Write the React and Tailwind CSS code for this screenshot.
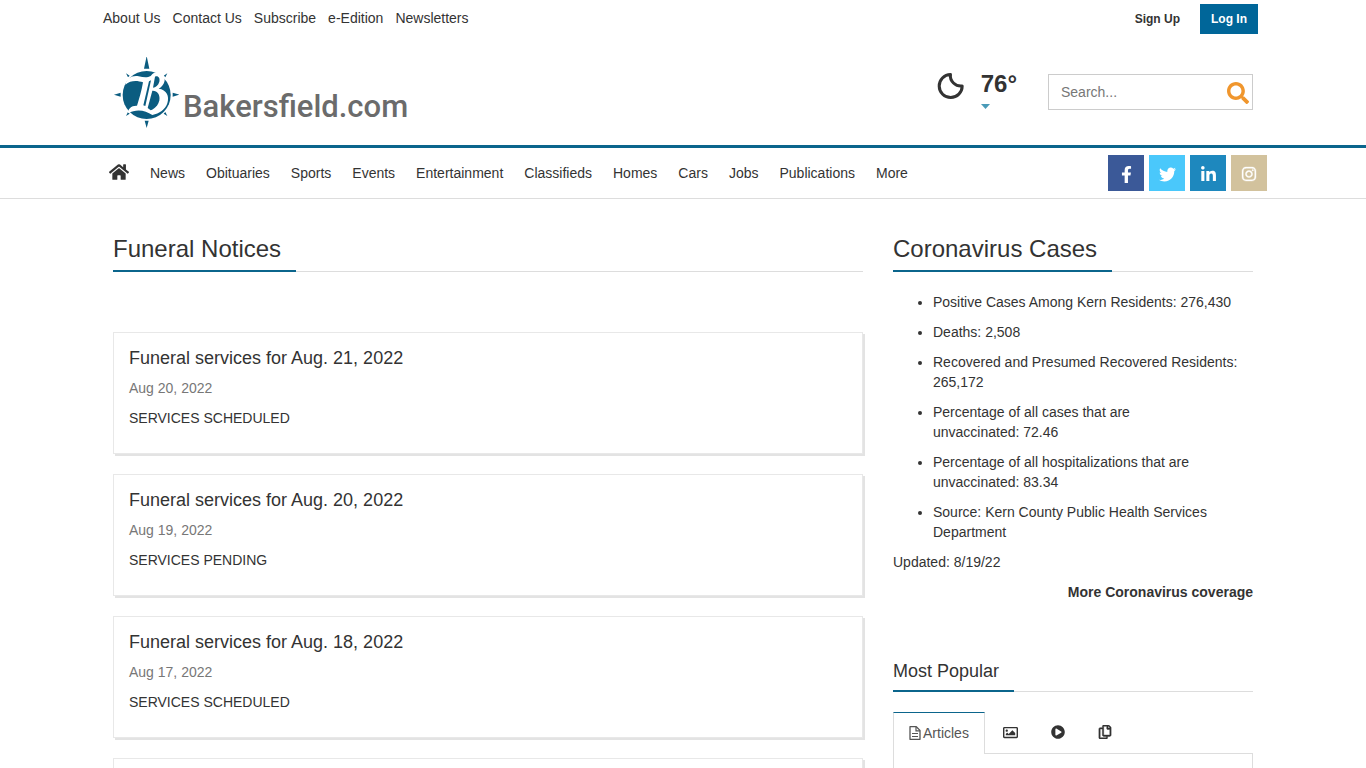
import React from "react";
import {
  FaHome,
  FaFacebookF,
  FaTwitter,
  FaLinkedinIn,
  FaInstagram,
  FaSearch,
  FaRegImage,
  FaPlayCircle,
  FaRegCopy,
} from "react-icons/fa";

const topLinks = ["About Us", "Contact Us", "Subscribe", "e-Edition", "Newsletters"];

const navLinks = [
  "News", "Obituaries", "Sports", "Events", "Entertainment", "Classifieds",
  "Homes", "Cars", "Jobs", "Publications", "More",
];

const social = [
  { label: "Facebook", Icon: FaFacebookF, bg: "bg-[#3b5998]", size: "size-[17px]" },
  { label: "Twitter", Icon: FaTwitter, bg: "bg-[#4ac8fb]", size: "size-[17px]" },
  { label: "LinkedIn", Icon: FaLinkedinIn, bg: "bg-[#1e88be]", size: "size-[17px]" },
  { label: "Instagram", Icon: FaInstagram, bg: "bg-[#d2c29d]", size: "size-[16px] stroke-current stroke-[12]" },
];

const notices = [
  { title: "Funeral services for Aug. 21, 2022", date: "Aug 20, 2022", text: "SERVICES SCHEDULED" },
  { title: "Funeral services for Aug. 20, 2022", date: "Aug 19, 2022", text: "SERVICES PENDING" },
  { title: "Funeral services for Aug. 18, 2022", date: "Aug 17, 2022", text: "SERVICES SCHEDULED" },
];

const cases = [
  "Positive Cases Among Kern Residents: 276,430",
  "Deaths: 2,508",
  "Recovered and Presumed Recovered Residents: 265,172",
  "Percentage of all cases that are unvaccinated:\u00a072.46",
  "Percentage of all hospitalizations that are unvaccinated:\u00a083.34",
  "Source: Kern County Public Health Services Department",
];

const card = "min-h-[122px] border border-[#e8e8e8] p-[15px] shadow-[2px_2px_0_#e3e3e3]";

function Emblem() {
  return (
    <svg viewBox="-1 0 66 72" className="h-[72px] w-[66px] shrink-0" aria-hidden="true">
      <g transform="translate(-14 -7) scale(0.33333)">
        <g fill="#0b5c80">
          <circle cx="140" cy="135" r="72" />
          <path d="M140 18l8 38h-16zM140 234l6-22h-12zM42 134l20-6v12zM238 134l-20-6v12z" />
          <path d="M78 70l11 7-5 5zM202 70l-11 7 5 5zM78 198l11-7-5-5zM202 198l-11-7 5-5z" />
        </g>
        <path
          fill="#fff"
          d="M76 104C80 86 96 75 116 79C130 82 142 84 152 78C162 66 176 62 186 69C200 80 196 106 176 116C200 119 209 138 202 160C196 179 178 191 157 195C136 180 110 176 84 189C84 176 94 166 111 167C117 148 125 122 129 97C112 91 92 90 76 104Z"
        />
        <g fill="#0b5c80">
          <path d="M165 80C174 76 181 84 178 95C175 106 167 112 159 113Z" />
          <path d="M157 122C171 121 181 133 178 151C175 166 164 177 152 181L143 174Z" />
          <path d="M147 94L153 91L136 168L130 166Z" />
        </g>
      </g>
    </svg>
  );
}

function Moon() {
  return (
    <svg viewBox="0 0 28 28" className="size-7" aria-label="Clear night">
      <path
        d="M13.500 2.500A11.500 11.500 0 1 0 25.200 14C18.500 14.800 12.500 9 13.500 2.500Z"
        fill="none"
        stroke="#333"
        strokeWidth="3"
        strokeLinejoin="round"
      />
    </svg>
  );
}

function FileIcon() {
  return (
    <svg viewBox="0 0 12 14" className="h-[14px] w-3" fill="none" stroke="currentColor" aria-hidden="true">
      <path d="M1 .7h6.300L11 4.400v8.900H1z" strokeWidth="1.300" strokeLinejoin="round" />
      <path d="M7 .9v3.900h4" strokeWidth="1.200" />
      <path d="M3 7.500h6M3 10.500h6" />
    </svg>
  );
}

function Heading({ children, size }) {
  return (
    <div className="border-b border-[#ddd]">
      <h2 className={`-mb-px inline-block border-b-2 border-[#0b658c] pr-[15px] align-top ${size}`}>{children}</h2>
    </div>
  );
}

export default function App() {
  return (
    <div className="bg-white font-['Liberation_Sans',Arial,sans-serif] text-sm leading-5 text-[#333]">
      <header>
        <div className="mx-auto flex h-[38px] max-w-[1170px] items-start justify-between pr-[10px] pl-[5px]">
          <nav aria-label="Utility" className="flex gap-3 pt-2">
            {topLinks.map((t) => (
              <a key={t} href="#">{t}</a>
            ))}
          </nav>
          <div className="flex items-center gap-5 pt-1 text-xs leading-5 font-bold">
            <a href="#">Sign Up</a>
            <a href="#" className="bg-[#006699] px-[11px] py-[5px] text-white">Log In</a>
          </div>
        </div>
        <div className="mx-auto flex h-[107px] max-w-[1170px] items-start justify-between px-[15px]">
          <a href="#" aria-label="Bakersfield.com" className="mt-[19px] flex">
            <Emblem />
            <span className="mt-[30px] ml-1 font-['Roboto',sans-serif] text-[31px] leading-10 font-medium text-[#6b6b6b]">
              Bakersfield.com
            </span>
          </a>
          <div className="mt-[34px] flex">
            <Moon />
            <button type="button" aria-label="Weather details" className="ml-4 flex flex-col items-start gap-2 text-left">
              <span className="text-2xl leading-6 font-bold">76°</span>
              <svg viewBox="0 0 10 5" className="h-[5px] w-[10px]" aria-hidden="true">
                <path d="M0 0h9L4.500 5z" fill="#4a9bb8" />
              </svg>
            </button>
            <form className="mt-[2px] ml-[31px] flex h-9 w-[205px] items-center border border-[#ccc]">
              <input
                type="search"
                aria-label="Search"
                placeholder="Search..."
                className="min-w-0 flex-1 pl-3 outline-none placeholder:text-[#777]"
              />
              <button type="button" aria-label="Submit search" className="px-[3px] pt-[2px] text-[#f0962d]">
                <FaSearch className="size-[22px]" />
              </button>
            </form>
          </div>
        </div>
      </header>
      <div className="border-t-[3px] border-b border-t-[#0b658c] border-b-[#ddd]">
        <div className="mx-auto flex h-[50px] max-w-[1170px] items-center justify-between pr-px pl-[11px]">
          <nav aria-label="Main" className="flex items-center gap-[21px]">
            <a href="#" aria-label="Home" className="pb-[3px]"><FaHome className="size-5" /></a>
            {navLinks.map((t) => (
              <a key={t} href="#">{t}</a>
            ))}
          </nav>
          <div className="flex gap-[5px]">
            {social.map(({ label, Icon, bg, size }) => (
              <a key={label} href="#" aria-label={label} className={`flex size-9 items-center justify-center pt-[2px] text-white ${bg}`}>
                <Icon className={size} />
              </a>
            ))}
          </div>
        </div>
      </div>
      <div className="mx-auto grid max-w-[1170px] grid-cols-[minmax(0,25fr)_minmax(0,12fr)] gap-[30px] px-[15px] pt-[35px]">
        <main>
          <Heading size="pb-[6px] text-2xl leading-[30px]">Funeral Notices</Heading>
          <div className="mt-[60px] flex flex-col gap-5">
            {notices.map((n) => (
              <article key={n.title} className={card}>
                <h3 className="text-lg leading-5"><a href="#">{n.title}</a></h3>
                <p className="mt-[10px] text-[#777]">{n.date}</p>
                <p className="mt-[10px]">{n.text}</p>
              </article>
            ))}
            <article className={card} />
          </div>
        </main>
        <aside>
          <Heading size="pb-[6px] text-2xl leading-[30px]">Coronavirus Cases</Heading>
          <ul className="mt-5 flex list-disc flex-col gap-[10px] pl-10">
            {cases.map((c) => (
              <li key={c}>{c}</li>
            ))}
          </ul>
          <p className="mt-[10px]">Updated: 8/19/22</p>
          <p className="mt-[10px] text-right font-bold"><a href="#">More Coronavirus coverage</a></p>
          <div className="mt-[59px]">
            <Heading size="pb-[9px] text-lg leading-5">Most Popular</Heading>
          </div>
          <div role="tablist" className="mt-5 flex">
            <button type="button" role="tab" aria-selected="true" className="flex h-[42px] items-center gap-[2px] border-x border-t border-x-[#ddd] border-t-[#0b658c] px-[15px] pb-[2px] text-[#555]">
              <FileIcon />
              Articles
            </button>
            <div className="flex flex-1 gap-[33px] border-b border-[#ddd] pb-px pl-[18px]">
              <button type="button" role="tab" aria-label="Images"><FaRegImage className="size-[15px]" /></button>
              <button type="button" role="tab" aria-label="Videos"><FaPlayCircle className="size-[14px]" /></button>
              <button type="button" role="tab" aria-label="Collections"><FaRegCopy className="size-[14px] stroke-current stroke-[16]" /></button>
            </div>
          </div>
          <div className="h-[145px] border-x border-b border-[#ddd]" />
        </aside>
      </div>
    </div>
  );
}
